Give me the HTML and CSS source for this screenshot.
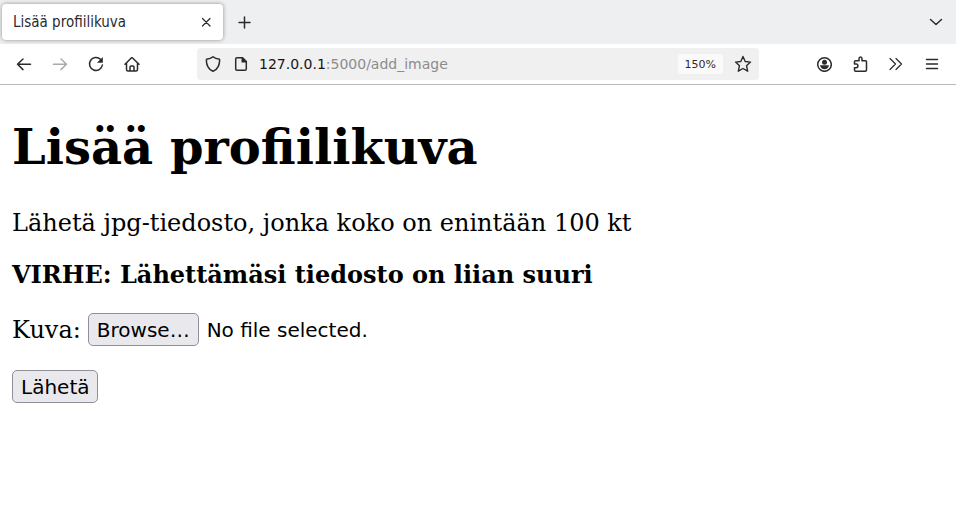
FILE: index.html
```html
<!DOCTYPE html>
<html lang="fi">
<head>
<meta charset="utf-8">
<title>Lisää profiilikuva</title>
<link rel="stylesheet" href="styles.css">
</head>
<body>
<header class="browser">
  <div class="tabs">
    <div class="tab">
      <span class="tab-title">Lisää profiilikuva</span>
      <button class="icon-button small" type="button" aria-label="Close tab"><svg width="16" height="16" viewBox="0 0 16 16"><path d="M4.500 4.500l7.500 7.500M12 4.500l-7.500 7.500"/></svg></button>
    </div>
    <button class="icon-button" type="button" aria-label="New tab"><svg width="16" height="16" viewBox="0 0 16 16"><path d="M8.500 3v11M3 8.500h11"/></svg></button>
    <button class="icon-button tab-list" type="button" aria-label="List all tabs"><svg width="16" height="16" viewBox="0 0 16 16"><path d="M2.500 5.500l5.500 5 5.500-5"/></svg></button>
  </div>
  <div class="toolbar">
    <nav class="navigation" aria-label="Navigation">
      <button class="icon-button" type="button" aria-label="Back"><svg width="16" height="16" viewBox="0 0 16 16"><path d="M14.500 8.300H1.500M7 3L1.500 8.300 7 13.600"/></svg></button>
      <button class="icon-button" type="button" aria-label="Forward" disabled><svg width="16" height="16" viewBox="0 0 16 16"><path d="M1.500 8.300h13M9 3l5.500 5.300L9 13.600"/></svg></button>
      <button class="icon-button" type="button" aria-label="Reload"><svg width="16" height="16" viewBox="0 0 16 16"><path d="M12.500 3.300A6.500 6.500 0 1 0 14.400 9"/><path class="solid" d="M14.800 1v5.800H9z"/></svg></button>
      <button class="icon-button" type="button" aria-label="Home"><svg width="16" height="16" viewBox="0 0 16 16"><path d="M1 8.300L7.500 1.800h.8L15 8.300M2.500 7.200v6.300q0 1.500 1.500 1.500h8q1.500 0 1.500-1.500V7.200M6 15v-4q0-1 1-1h2q1 0 1 1v4"/></svg></button>
    </nav>
    <div class="address">
      <svg width="16" height="16" viewBox="0 0 16 16"><path d="M8 .8C6 2.500 3.500 3 1.500 3.200 1 8 3 13.500 8 15.300 13 13.500 15 8 14.500 3.200 12.500 3 10 2.500 8 .8z"/></svg>
      <svg width="16" height="16" viewBox="0 0 16 16"><path d="M9.500 1.700H4Q2.700 1.700 2.700 3v10q0 1.300 1.300 1.300h8q1.300 0 1.300-1.300V5.500z"/><path class="solid" d="M8.500 1h1l4.500 4.500v1H8.500z"/></svg>
      <a class="url" href="#"><span class="host">127.0.0.1</span>:5000/add_image</a>
      <button class="zoom" type="button">150%</button>
      <button class="icon-button small" type="button" aria-label="Bookmark this page"><svg class="star" width="18" height="18" viewBox="0 0 18 18"><path d="M9 1.500l2.200 5 5.300.6-4 3.600 1.200 5.500L9 13.500l-4.700 2.700 1.200-5.500-4-3.600 5.300-.6z"/></svg></button>
    </div>
    <div class="tools">
      <button class="icon-button" type="button" aria-label="Account"><svg width="16" height="16" viewBox="0 0 16 16"><circle cx="8.500" cy="8.500" r="6.800"/><circle class="solid" cx="8.500" cy="6.200" r="2.500"/><path class="solid" d="M4 9.300h9q-.8 3.900-4.500 3.900T4 9.300z"/></svg></button>
      <button class="icon-button" type="button" aria-label="Extensions"><svg width="16" height="16" viewBox="0 0 16 16"><path d="M2.500 8V5.500Q2.500 4.700 3.500 4.700H7V2.800Q7 1 8.500 1T10 2.800v1.900h3.500q1 0 1 1V14q0 1.200-1.200 1.200h-9.600q-1.200 0-1.200-1.200v-2.300h1.700q1.700 0 1.700-1.900T4.200 8z"/></svg></button>
      <button class="icon-button" type="button" aria-label="More tools"><svg class="thin" width="16" height="16" viewBox="0 0 16 16"><path d="M2 2.500L7.500 8 2 13.500M8 2.500L13.500 8 8 13.500"/></svg></button>
      <button class="icon-button" type="button" aria-label="Menu"><svg width="16" height="16" viewBox="0 0 16 16"><path d="M2.500 3.500h11M2.500 8h11M2.500 12.500h11"/></svg></button>
    </div>
  </div>
</header>
<main class="page">
  <h1>Lisää profiilikuva</h1>
  <p>Lähetä jpg-tiedosto, jonka koko on enintään 100 kt</p>
  <p><b>VIRHE: Lähettämäsi tiedosto on liian suuri</b></p>
  <form>
    <div class="field">
      <label for="image">Kuva:</label>
      <div class="picker">
        <span class="control">Browse…</span>
        <span>No file selected.</span>
        <input id="image" type="file" accept="image/jpeg">
      </div>
    </div>
    <button class="control" type="submit">Lähetä</button>
  </form>
</main>
</body>
</html>
```
FILE: styles.css
```css
* {
  box-sizing: border-box;
}

body {
  margin: 0;
  background: #fff;
  color: #000;
  font-family: "DejaVu Serif", serif;
  font-size: 24px;
  line-height: 28px;
}

button {
  margin: 0;
  font-family: "DejaVu Sans", sans-serif;
}

.browser {
  border-bottom: 1px solid #b9b9bb;
  color: #2b2b2f;
  font-family: "DejaVu Sans", sans-serif;
  line-height: 16px;
}

.tabs {
  display: flex;
  align-items: center;
  height: 44px;
  padding: 0 4px 0 2px;
  background: #eeeff1;
}

.tab {
  display: flex;
  align-items: center;
  justify-content: space-between;
  width: 221px;
  height: 36px;
  padding: 0 5px 0 11px;
  border-radius: 4px;
  background: #fff;
  box-shadow: 0 0 4px rgba(0, 0, 0, 0.4);
  font-family: "DejaVu Sans Condensed", "DejaVu Sans", sans-serif;
  font-size: 15px;
}

.icon-button {
  display: flex;
  align-items: center;
  justify-content: center;
  width: 32px;
  height: 32px;
  padding: 0;
  border: 0;
  background: none;
  color: inherit;
}

.icon-button.small {
  width: 24px;
  height: 24px;
}

.icon-button:disabled {
  color: #aaaaac;
}

.tabs > .icon-button {
  margin-left: 5px;
}

.tabs > .tab-list {
  margin-left: auto;
}

svg {
  flex: none;
  fill: none;
  stroke: currentColor;
  stroke-width: 1.5;
  stroke-linecap: round;
  stroke-linejoin: round;
}

.small svg,
svg.thin {
  stroke-width: 1.2;
}

.small svg.star {
  stroke-width: 1.4;
}

.solid {
  fill: currentColor;
  stroke: none;
}

.toolbar {
  display: flex;
  align-items: center;
  height: 40px;
  padding: 0 8px;
}

.navigation,
.tools {
  display: flex;
  gap: 4px;
}

.address {
  display: flex;
  align-items: center;
  flex: 1;
  gap: 12px;
  height: 32px;
  margin: 0 49px;
  padding: 0 4px 0 8px;
  border-radius: 4px;
  background: #f0f0f0;
  font-size: 14px;
}

.url {
  flex: 1;
  margin-left: -2px;
  color: #8c8c8e;
  text-decoration: none;
}

.host {
  color: #15141a;
}

.zoom {
  height: 20px;
  margin-right: -4px;
  padding: 0 7px;
  border: 0;
  border-radius: 3px;
  background: #fafafa;
  color: #2b2b2f;
  font-size: 11px;
}

.page {
  padding: 32px 12px;
}

h1 {
  margin: 0 0 32px;
  font-size: 48px;
  line-height: 60px;
}

p {
  margin: 0 0 24px;
}

.field {
  display: flex;
  align-items: center;
  gap: 7px;
  margin-bottom: 24px;
}

.picker {
  position: relative;
  display: flex;
  align-items: center;
  gap: 8px;
  font-family: "DejaVu Sans", sans-serif;
  font-size: 20px;
}

.picker input {
  position: absolute;
  inset: 0;
  width: 100%;
  opacity: 0;
}

.control {
  height: 33px;
  padding: 0 8px;
  border: 1px solid #8f8f9d;
  border-radius: 5px;
  background: #e9e9ed;
  color: #000;
  font-size: 20px;
  line-height: 32px;
}
```
